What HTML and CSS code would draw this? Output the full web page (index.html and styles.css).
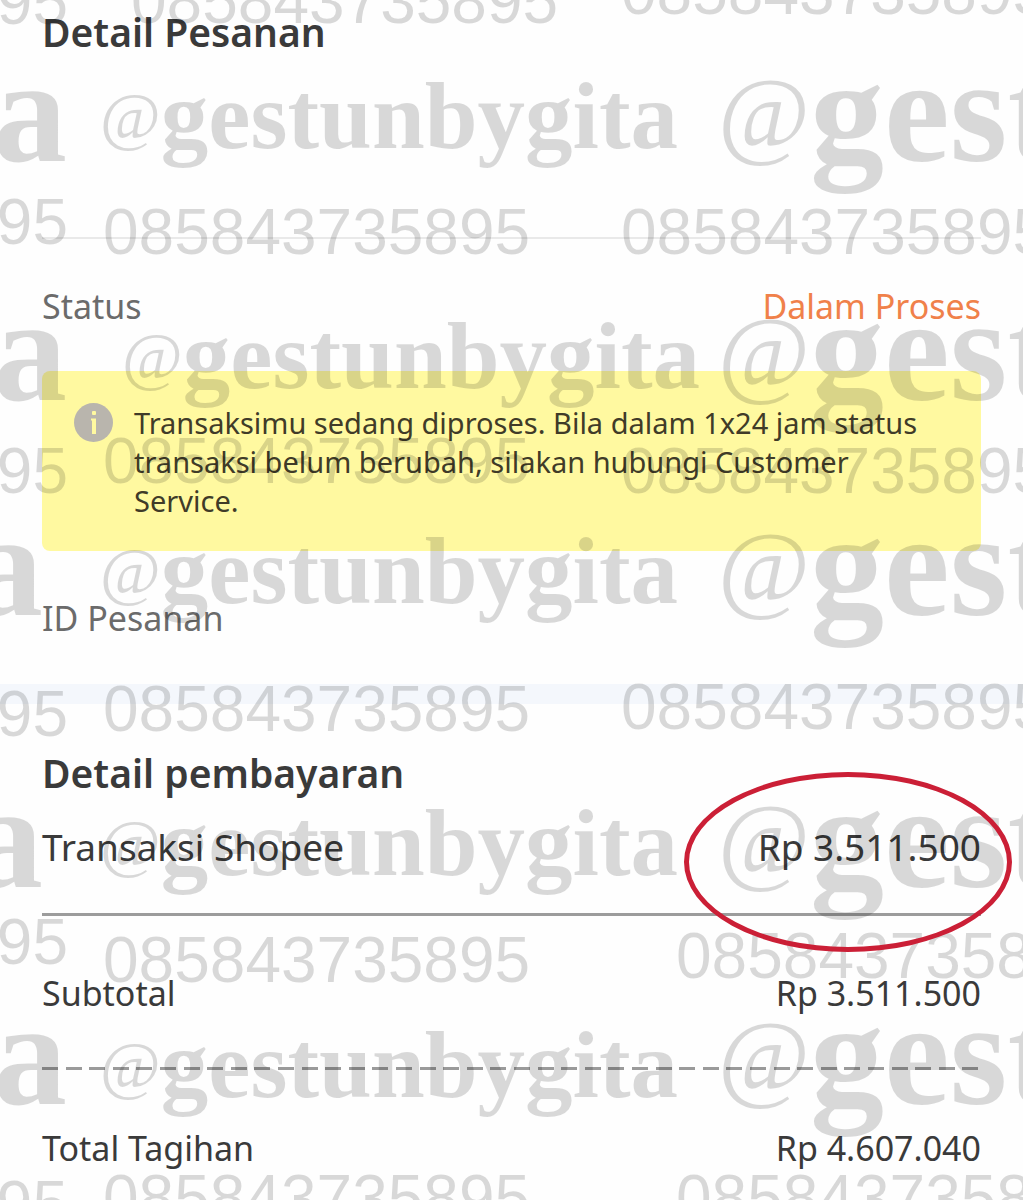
FILE: index.html
```html
<!DOCTYPE html>
<html lang="id">
<head>
    <meta charset="UTF-8">
    <meta name="viewport" content="width=device-width, initial-scale=1.0">
    <title>Detail Pesanan</title>
    <link rel="stylesheet" href="styles.css">
</head>
<body>
    <main class="page">
        <section class="order">
            <h2>Detail Pesanan</h2>
            <hr class="divider">
            <div class="row muted">
                <span>Status</span>
                <span class="status">Dalam Proses</span>
            </div>
            <div class="notice">
                <svg class="notice-icon" viewBox="0 0 39 39" aria-hidden="true">
                    <circle cx="19.5" cy="19.5" r="19.5" fill="#b9b5ad"/>
                    <rect x="18" y="8" width="4" height="4" rx="1" fill="#fff9a0"/>
                    <path d="M17 15.500h5V31h-4V17.500h-1z" fill="#fff9a0"/>
                </svg>
                <p>Transaksimu sedang diproses. Bila dalam 1x24 jam status transaksi belum berubah, silakan hubungi Customer Service.</p>
            </div>
            <div class="row muted">
                <span>ID Pesanan</span>
            </div>
        </section>

        <section class="payment">
            <h2>Detail pembayaran</h2>
            <div class="row item">
                <span>Transaksi Shopee</span>
                <span class="circled">Rp 3.511.500</span>
            </div>
            <hr class="line">
            <div class="row">
                <span>Subtotal</span>
                <span>Rp 3.511.500</span>
            </div>
            <hr class="dashed">
            <div class="row">
                <span>Total Tagihan</span>
                <span>Rp 4.607.040</span>
            </div>
        </section>

        <!-- watermark -->
        <svg class="watermark" aria-hidden="true">
            <g class="phone">
                <text class="end" x="68" y="24">95</text>
                <text x="131" y="23">085843735895</text>
                <text x="621" y="14">085843735895</text>

                <text class="end" x="68" y="244">95</text>
                <text x="103" y="254">085843735895</text>
                <text x="621" y="254">085843735895</text>

                <text class="end" x="68" y="493">95</text>
                <text x="103" y="483">085843735895</text>
                <text x="621" y="493">085843735895</text>

                <text class="end" x="68" y="736">95</text>
                <text x="103" y="731">085843735895</text>
                <text x="621" y="729">085843735895</text>

                <text class="end" x="68" y="964">95</text>
                <text x="103" y="982">085843735895</text>
                <text x="676" y="978">085843735895</text>

                <text class="end" x="68" y="1226">95</text>
                <text x="103" y="1220">085843735895</text>
                <text x="676" y="1220">085843735895</text>
            </g>
            <g class="name">
                <text x="100" y="138"><tspan class="at">@</tspan><tspan dy="10">gestunbygita</tspan></text>
                <text x="122" y="378"><tspan class="at">@</tspan><tspan dy="10">gestunbygita</tspan></text>
                <text x="100" y="593"><tspan class="at">@</tspan><tspan dy="10">gestunbygita</tspan></text>
                <text x="100" y="865"><tspan class="at">@</tspan><tspan dy="10">gestunbygita</tspan></text>
                <text x="100" y="1087"><tspan class="at">@</tspan><tspan dy="10">gestunbygita</tspan></text>
            </g>
            <g class="name big">
                <text class="end" x="67" y="161">a</text>
                <text x="718" y="146"><tspan class="at">@</tspan><tspan dy="15">gestunbygita</tspan></text>
                <text class="end" x="67" y="400">a</text>
                <text x="718" y="385"><tspan class="at">@</tspan><tspan dy="15">gestunbygita</tspan></text>
                <text class="end" x="43" y="615">a</text>
                <text x="718" y="600"><tspan class="at">@</tspan><tspan dy="15">gestunbygita</tspan></text>
                <text class="end" x="43" y="887">a</text>
                <text x="718" y="872"><tspan class="at">@</tspan><tspan dy="15">gestunbygita</tspan></text>
                <text class="end" x="67" y="1104">a</text>
                <text x="718" y="1089"><tspan class="at">@</tspan><tspan dy="15">gestunbygita</tspan></text>
            </g>
        </svg>
    </main>
</body>
</html>
```
FILE: styles.css
```css
*,
*::after {
    box-sizing: border-box;
}
body {
    margin: 0;
    background: #fefefe;
    color: #3a3a3a;
    font-family: "Noto Sans", sans-serif;
    font-size: 34px;
    line-height: 46px;
}
h2 {
    margin: 0;
    font-size: 39px;
    font-weight: 600;
    line-height: 52px;
}
hr {
    border: none;
    margin: 0;
}
.page {
    position: relative;
    overflow: hidden;
}
.order {
    padding: 6px 42px 43px;
    border-bottom: 20px solid #f4f7fc;
}
.payment {
    padding: 43px 42px 29px;
}
.row {
    display: flex;
    justify-content: space-between;
}
.muted {
    color: #6b6b6b;
}
.status {
    color: #f0814a;
}
.divider {
    height: 2px;
    margin: 179px 0 44px;
    background: #e9e9e9;
}
.notice {
    display: flex;
    align-items: flex-start;
    gap: 21px;
    margin: 42px 0 44px;
    padding: 32px 32px 31px;
    border-radius: 8px;
    background: #fff9a0;
    color: #403b28;
    font-size: 29px;
    line-height: 39px;
}
.notice p {
    margin: 0;
}
.notice-icon {
    flex: none;
    width: 39px;
    height: 39px;
}
.item {
    margin-top: 23px;
    font-size: 37px;
    line-height: 50px;
}
.line {
    height: 3px;
    margin: 41px 0 54px;
    background: #9c9c9c;
}
/* negative margin drops the gap after the last dash */
.dashed {
    height: 3px;
    margin: 51px -5px 55px 0;
    background: repeating-linear-gradient(90deg, #9a9a9a 0 1.7%, transparent 1.7% 2.5%);
}
.circled {
    position: relative;
}
.circled::after {
    content: "";
    position: absolute;
    top: -50px;
    right: -31px;
    z-index: 2;
    width: 328px;
    height: 180px;
    border: 5px solid #cb1f36;
    border-radius: 50%;
}

.watermark {
    position: absolute;
    top: 0;
    left: 0;
    z-index: 1;
    width: 100%;
    height: 100%;
    fill: rgba(0, 0, 0, 0.15);
    pointer-events: none;
}
.watermark .end {
    text-anchor: end;
}
.phone {
    font-family: "Liberation Sans", sans-serif;
    font-size: 64px;
}
.name {
    font-family: "Liberation Serif", serif;
    font-size: 95px;
    font-weight: 700;
}
.name .at {
    font-size: 66px;
    font-weight: 400;
}
.big {
    font-size: 148px;
}
.big .at {
    font-size: 100px;
}
```
